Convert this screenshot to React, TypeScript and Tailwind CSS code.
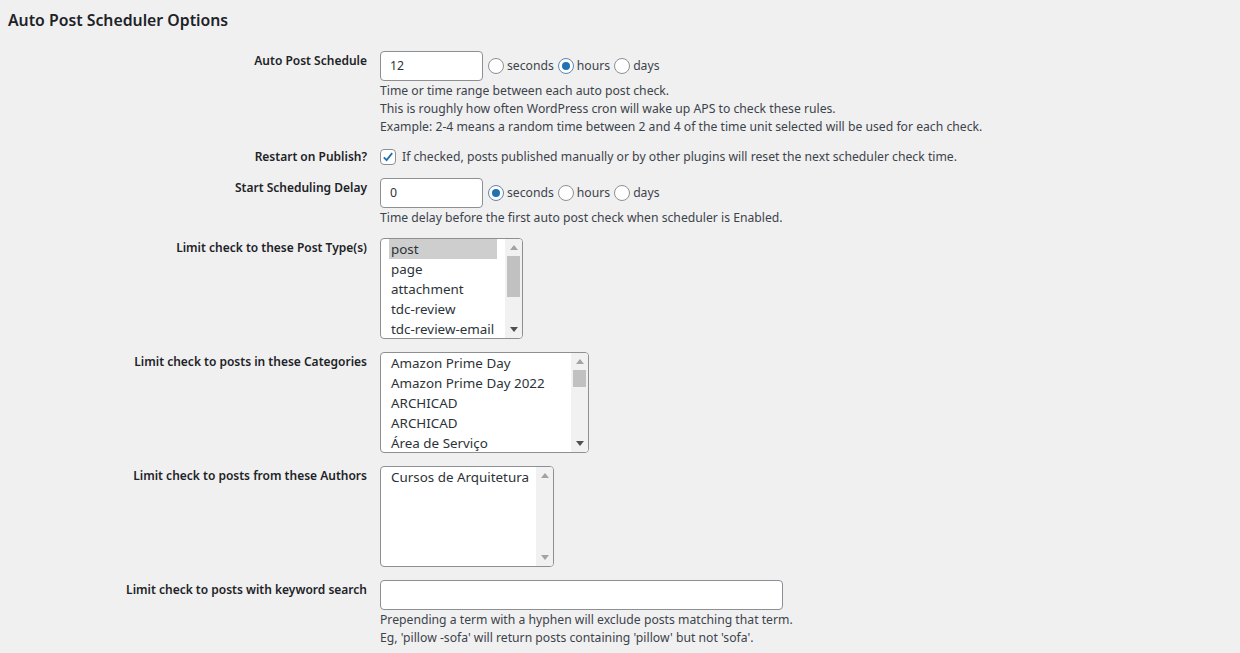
import React from 'react';

const font = "font-['Noto_Sans','Open_Sans',sans-serif]";

function Radio({ checked }: { checked?: boolean }) {
  return (
    <span
      className={`flex h-4 w-4 shrink-0 items-center justify-center rounded-full border bg-white ${
        checked ? 'border-[#5b86b4]' : 'border-[#8c8f94]'
      }`}
    >
      {checked && <span className="h-2 w-2 rounded-full bg-[#2271b1]" />}
    </span>
  );
}

function UnitPicker({ value }: { value: string }) {
  const units = ['seconds', 'hours', 'days'];
  return (
    <div className="flex items-center">
      {units.map((u) => (
        <label key={u} className="ml-[4px] flex items-center first:ml-[5px]">
          <Radio checked={u === value} />
          <span className="ml-[3px]">{u}</span>
        </label>
      ))}
    </div>
  );
}

function TextInput({ value, width }: { value?: string; width: string }) {
  return (
    <div
      className={`flex h-[30px] items-center rounded-[4px] border border-[#8c8f94] bg-white px-[9px] text-[12.3px] text-[#2c3338] ${width}`}
    >
      {value}
    </div>
  );
}

function Arrow({ up, dark }: { up?: boolean; dark?: boolean }) {
  return (
    <svg width="8" height="5" viewBox="0 0 8 5" className="block">
      <path d={up ? 'M0 5 L4 0 L8 5 Z' : 'M0 0 L4 5 L8 0 Z'} fill={dark ? '#505050' : '#a3a3a3'} />
    </svg>
  );
}

function ListBox({
  items,
  width,
  selected,
  thumb,
}: {
  items: string[];
  width: string;
  selected?: number;
  thumb?: string;
}) {
  return (
    <div className={`flex h-[101px] overflow-hidden rounded-[4px] border border-[#8c8f94] bg-white ${width}`}>
      <ul className="min-w-0 flex-1 overflow-hidden px-[8px] text-[13.4px] leading-[20px] text-[#2c3338]">
        {items.map((it, i) => (
          <li key={it + i} className={`whitespace-nowrap px-[2px] ${i === selected ? 'bg-[#cecece]' : ''}`}>
            {it}
          </li>
        ))}
      </ul>
      <div className="flex w-[17px] shrink-0 flex-col bg-[#f1f1f1]">
        <div className="flex h-[17px] items-center justify-center">
          <Arrow up />
        </div>
        <div className="flex-1 px-[2px]">{thumb && <div className={`w-full bg-[#c1c1c1] ${thumb}`} />}</div>
        <div className="flex h-[17px] items-center justify-center">
          <Arrow dark={!!thumb} />
        </div>
      </div>
    </div>
  );
}

function Row({ label, className, children }: { label: string; className?: string; children: React.ReactNode }) {
  return (
    <div className={`grid grid-cols-[367px_1fr] gap-x-[13px] ${className ?? ''}`}>
      <div className="pt-[1px] text-right text-[12px] font-semibold text-[#1d2327]">{label}</div>
      <div>{children}</div>
    </div>
  );
}

function Desc({ lines }: { lines: string[] }) {
  return (
    <div className="pt-[1px]">
      {lines.map((l) => (
        <p key={l}>{l}</p>
      ))}
    </div>
  );
}

export default function App() {
  return (
    <div className={`min-h-screen bg-[#f0f0f1] text-[12.2px] leading-[18px] text-[#3c434a] ${font}`}>
      <h2 className="pl-[8px] pt-[8px] text-[15.8px] font-semibold leading-[24px] text-[#1d2327]">
        Auto Post Scheduler Options
      </h2>

      <div className="flex flex-col">
        <Row label="Auto Post Schedule" className="mt-[19px]">
          <div className="flex items-center">
            <TextInput value="12" width="w-[103px]" />
            <UnitPicker value="hours" />
          </div>
          <Desc
            lines={[
              'Time or time range between each auto post check.',
              'This is roughly how often WordPress cron will wake up APS to check these rules.',
              'Example: 2-4 means a random time between 2 and 4 of the time unit selected will be used for each check.',
            ]}
          />
        </Row>

        <Row label="Restart on Publish?" className="mt-[11px]">
          <div className="flex items-center pt-[1px]">
            <span className="flex h-4 w-4 shrink-0 items-center justify-center rounded-[4px] border border-[#8c8f94] bg-white">
              <svg width="14" height="14" viewBox="0 0 20 20">
                <path d="M4 10.5 L8 14.5 L16 4.5" fill="none" stroke="#2271b1" strokeWidth="2.6" />
              </svg>
            </span>
            <span className="ml-[6px]">
              If checked, posts published manually or by other plugins will reset the next scheduler check time.
            </span>
          </div>
        </Row>

        <Row label="Start Scheduling Delay" className="mt-[12px]">
          <div className="flex items-center">
            <TextInput value="0" width="w-[103px]" />
            <UnitPicker value="seconds" />
          </div>
          <Desc lines={['Time delay before the first auto post check when scheduler is Enabled.']} />
        </Row>

        <Row label="Limit check to these Post Type(s)" className="mt-[11px]">
          <ListBox
            items={['post', 'page', 'attachment', 'tdc-review', 'tdc-review-email']}
            width="w-[143px]"
            selected={0}
            thumb="h-[41px]"
          />
        </Row>

        <Row label="Limit check to posts in these Categories" className="mt-[13px]">
          <ListBox
            items={['Amazon Prime Day', 'Amazon Prime Day 2022', 'ARCHICAD', 'ARCHICAD', 'Área de Serviço']}
            width="w-[209px]"
            thumb="h-[17px]"
          />
        </Row>

        <Row label="Limit check to posts from these Authors" className="mt-[13px]">
          <ListBox items={['Cursos de Arquitetura']} width="w-[174px]" />
        </Row>

        <Row label="Limit check to posts with keyword search" className="mt-[13px]">
          <TextInput width="w-[403px]" />
          <Desc
            lines={[
              'Prepending a term with a hyphen will exclude posts matching that term.',
              "Eg, 'pillow -sofa' will return posts containing 'pillow' but not 'sofa'.",
            ]}
          />
        </Row>
      </div>
    </div>
  );
}
